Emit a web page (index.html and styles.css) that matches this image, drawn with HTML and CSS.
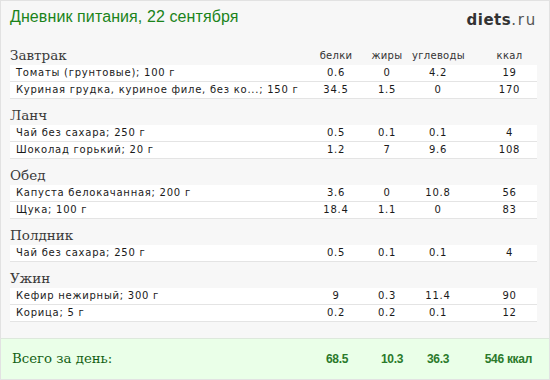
FILE: index.html
```html
<!DOCTYPE html>
<html lang="ru">
<head>
<meta charset="utf-8">
<title>Дневник питания</title>
<link rel="stylesheet" href="styles.css">
</head>
<body>
<div class="card">
  <header class="top">
    <h1 class="title">Дневник питания, 22 сентября</h1>
    <div class="logo"><b>diets</b><span class="tld">.ru</span></div>
  </header>

  <div class="meals">
    <section class="meal">
      <div class="meal-head">
        <h2>Завтрак</h2>
        <span class="col">белки</span><span class="col">жиры</span><span class="col">углеводы</span><span class="col kcal">ккал</span>
      </div>
      <div class="row"><span class="name">Томаты (грунтовые); 100 г</span><span class="col">0.6</span><span class="col">0</span><span class="col">4.2</span><span class="col kcal">19</span></div>
      <div class="row"><span class="name">Куриная грудка, куриное филе, без ко...; 150 г</span><span class="col">34.5</span><span class="col">1.5</span><span class="col">0</span><span class="col kcal">170</span></div>
    </section>

    <section class="meal">
      <div class="meal-head"><h2>Ланч</h2></div>
      <div class="row"><span class="name">Чай без сахара; 250 г</span><span class="col">0.5</span><span class="col">0.1</span><span class="col">0.1</span><span class="col kcal">4</span></div>
      <div class="row"><span class="name">Шоколад горький; 20 г</span><span class="col">1.2</span><span class="col">7</span><span class="col">9.6</span><span class="col kcal">108</span></div>
    </section>

    <section class="meal">
      <div class="meal-head"><h2>Обед</h2></div>
      <div class="row"><span class="name">Капуста белокачанная; 200 г</span><span class="col">3.6</span><span class="col">0</span><span class="col">10.8</span><span class="col kcal">56</span></div>
      <div class="row"><span class="name">Щука; 100 г</span><span class="col">18.4</span><span class="col">1.1</span><span class="col">0</span><span class="col kcal">83</span></div>
    </section>

    <section class="meal">
      <div class="meal-head"><h2>Полдник</h2></div>
      <div class="row"><span class="name">Чай без сахара; 250 г</span><span class="col">0.5</span><span class="col">0.1</span><span class="col">0.1</span><span class="col kcal">4</span></div>
    </section>

    <section class="meal">
      <div class="meal-head"><h2>Ужин</h2></div>
      <div class="row"><span class="name">Кефир нежирный; 300 г</span><span class="col">9</span><span class="col">0.3</span><span class="col">11.4</span><span class="col kcal">90</span></div>
      <div class="row"><span class="name">Корица; 5 г</span><span class="col">0.2</span><span class="col">0.2</span><span class="col">0.1</span><span class="col kcal">12</span></div>
    </section>
  </div>

  <footer class="total">
    <span class="total-label">Всего за день:</span>
    <span class="tv">68.5</span><span class="tv">10.3</span><span class="tv">36.3</span><span class="tv tk">546 ккал</span>
  </footer>
</div>
</body>
</html>
```

FILE: styles.css
```css
html, body {
  margin: 0;
  padding: 0;
  background: #fff;
}

.card {
  width: 550px;
  height: 380px;
  box-sizing: border-box;
  border: 1px solid #e2e2e2;
  background: #f7f7f7;
  display: flex;
  flex-direction: column;
  overflow: hidden;
}

.top {
  display: flex;
  justify-content: space-between;
  align-items: flex-start;
  height: 38px;
  padding: 4px 14px 0 9px;
  box-sizing: border-box;
}

.title {
  margin: 0;
  font: normal 16px/24px "Liberation Sans", Arial, sans-serif;
  color: #1b841b;
  letter-spacing: 0.1px;
}

.logo {
  font: normal 15px/20px "DejaVu Sans", sans-serif;
  color: #555;
  padding-top: 5px;
  letter-spacing: 0.5px;
}

.logo b {
  font-weight: bold;
  color: #333;
}

.tld {
  letter-spacing: 1.8px;
  margin-right: -2px;
}

.meals {
  flex: 1;
  padding: 0 12px 0 9px;
}

.meal-head,
.row {
  display: grid;
  grid-template-columns: 1fr 52px 50px 52px 73px;
  align-items: end;
}

.meal-head {
  height: 26px;
  box-sizing: border-box;
  padding: 7px 0 1px;
}

.meal-head h2 {
  margin: 0;
  font: normal 13.5px/18px "DejaVu Serif", Georgia, serif;
  color: #3a3a3a;
}

.meal-head .col {
  font: 10px/16px "DejaVu Sans", Verdana, sans-serif;
  color: #333;
  letter-spacing: 0.3px;
}

.row {
  height: 17px;
  box-sizing: border-box;
  background: #fff;
  border-bottom: 1px solid #e4e4e4;
  align-items: center;
  font: 10px/16px "DejaVu Sans", Verdana, sans-serif;
  color: #1a1a1a;
  letter-spacing: 0.75px;
}

.name {
  padding-left: 6px;
  white-space: nowrap;
  overflow: hidden;
}

.col {
  text-align: center;
}

.kcal {
  padding-left: 19px;
  padding-right: 1px;
}

.total {
  height: 41px;
  box-sizing: border-box;
  background: #eaffe8;
  border-top: 1px solid #dde8dc;
  padding: 0 12px 0 11px;
  display: grid;
  grid-template-columns: 298px 54px 56px 36px 81px;
  align-items: center;
}

.total-label {
  font: normal 13.3px/18px "DejaVu Serif", Georgia, serif;
  color: #145f14;
}

.tv {
  text-align: center;
  font: bold 12px/16px "Liberation Sans", Arial, sans-serif;
  color: #2b7a2b;
  letter-spacing: -0.3px;
}

.tk {
  text-align: right;
  padding-right: 5px;
}
```
